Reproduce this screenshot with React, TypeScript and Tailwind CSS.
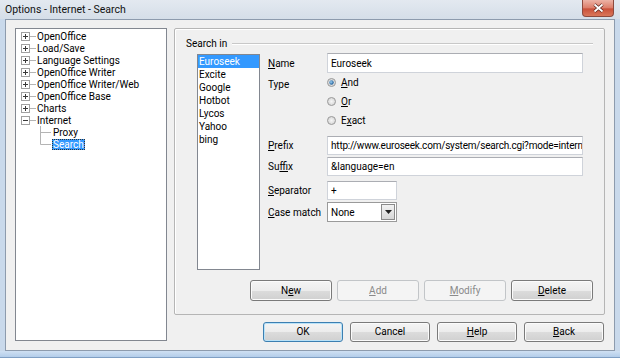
import React from "react";

type TreeNode = {
  label: string;
  state?: "plus" | "minus";
  child?: boolean;
  last?: boolean;
  selected?: boolean;
};

const treeNodes: TreeNode[] = [
  { label: "OpenOffice", state: "plus" },
  { label: "Load/Save", state: "plus" },
  { label: "Language Settings", state: "plus" },
  { label: "OpenOffice Writer", state: "plus" },
  { label: "OpenOffice Writer/Web", state: "plus" },
  { label: "OpenOffice Base", state: "plus" },
  { label: "Charts", state: "plus" },
  { label: "Internet", state: "minus" },
  { label: "Proxy", child: true },
  { label: "Search", child: true, last: true, selected: true },
];

const engines = ["Euroseek", "Excite", "Google", "Hotbot", "Lycos", "Yahoo", "bing"];

// underline the mnemonic letter
function Mn({ text, at }: { text: string; at: number }) {
  return (
    <>
      {text.slice(0, at)}
      <span className="underline underline-offset-[1px]">{text[at]}</span>
      {text.slice(at + 1)}
    </>
  );
}

function Expander({ open }: { open: boolean }) {
  return (
    <svg width="9" height="9" viewBox="0 0 9 9" className="shrink-0">
      <rect x="0.5" y="0.5" width="8" height="8" fill="#fff" stroke="#a0a0a0" />
      <path d="M2 4.5h5" stroke="#3a3a3a" />
      {!open && <path d="M4.5 2v5" stroke="#3a3a3a" />}
    </svg>
  );
}

function Connector({ last }: { last?: boolean }) {
  return (
    <svg width="11" height="12" viewBox="0 0 11 12" className="shrink-0">
      <path d={last ? "M0.5 0v6.5H11" : "M0.5 0v12M0.5 6.5H11"} stroke="#b4b4b4" fill="none" />
    </svg>
  );
}

function Radio({ checked }: { checked?: boolean }) {
  return (
    <svg width="9" height="9" viewBox="0 0 9 9" className="shrink-0">
      <defs>
        <radialGradient id="rg" cx="0.5" cy="0.5" r="0.5">
          <stop offset="0" stopColor="#f6f6f6" />
          <stop offset="1" stopColor="#d6d6d6" />
        </radialGradient>
        <radialGradient id="rd" cx="0.4" cy="0.4" r="0.6">
          <stop offset="0" stopColor="#9fd2f4" />
          <stop offset="1" stopColor="#1c5a95" />
        </radialGradient>
      </defs>
      <circle cx="4.5" cy="4.5" r="4" fill="url(#rg)" stroke="#9a9a9a" />
      {checked && <circle cx="4.5" cy="4.5" r="2.2" fill="url(#rd)" />}
    </svg>
  );
}

function WinButton({
  children,
  disabled,
  isDefault,
  className = "",
}: {
  children: React.ReactNode;
  disabled?: boolean;
  isDefault?: boolean;
  className?: string;
}) {
  const look = disabled
    ? "border-[#c2c5c8] bg-[#f4f4f4] text-[#8a8a8a]"
    : isDefault
      ? "border-[#3c7fb1] bg-[linear-gradient(to_bottom,#f4f4f4_0%,#ececec_50%,#dcdcdc_51%,#d0d0d0_100%)] shadow-[inset_0_0_0_1px_#b9e2f8]"
      : "border-[#7a7a7a] bg-[linear-gradient(to_bottom,#f4f4f4_0%,#ececec_50%,#dcdcdc_51%,#d0d0d0_100%)] shadow-[inset_0_0_0_1px_#fbfbfb]";
  return (
    <div className={`flex items-center justify-center rounded-[3px] border ${look} ${className}`}>
      <span className="leading-[12px]">{children}</span>
    </div>
  );
}

function TextBox({ value, className = "" }: { value: string; className?: string }) {
  return (
    <div
      className={`flex items-center overflow-hidden whitespace-nowrap border border-[#cfd3da] border-t-[#abadb3] bg-white pl-[3px] ${className}`}
    >
      {value}
    </div>
  );
}

function TreePanel() {
  return (
    <div className="h-[313px] w-[152px] shrink-0 border border-[#828790] bg-white pt-[1px]">
      {treeNodes.map((n) => (
        <div key={n.label} className="flex h-[12px] items-center whitespace-nowrap">
          {n.child ? (
            <>
              <div className="w-[24px] shrink-0" />
              <Connector last={n.last} />
              <span
                className={`ml-[1px] px-[1px] leading-[11px] ${
                  n.selected ? "bg-[#3399ff] text-white outline outline-dotted outline-[#333] -outline-offset-1" : ""
                }`}
              >
                {n.label}
              </span>
            </>
          ) : (
            <>
              <div className="w-[5px] shrink-0" />
              <Expander open={n.state === "minus"} />
              <div className="h-px w-[6px] shrink-0 bg-[#b4b4b4]" />
              <span className="ml-[1px]">{n.label}</span>
            </>
          )}
        </div>
      ))}
    </div>
  );
}

function SearchPanel() {
  return (
    <div className="flex h-[287px] flex-col rounded-[2px] border border-[#b5b5b5] shadow-[inset_1px_1px_0_#fff]">
      <div className="mt-[9px] flex h-[12px] items-center pl-[11px] pr-[11px]">
        <span className="leading-[12px]">Search in</span>
        <div className="ml-[5px] h-[2px] flex-1 border-t border-b border-t-[#c8c8c8] border-b-white" />
      </div>

      <div className="mt-[3px] flex pl-[22px]">
        <div className="mt-[1px] h-[216px] w-[63px] shrink-0 border border-[#828790] bg-white">
          {engines.map((e, i) => (
            <div
              key={e}
              className={`flex h-[13px] items-center px-[1px] ${i === 0 ? "bg-[#3399ff] text-white" : ""}`}
            >
              {e}
            </div>
          ))}
        </div>

        <div className="ml-[8px] flex flex-col">
          <div className="flex h-[20px] items-center">
            <span className="w-[59px] shrink-0">
              <Mn text="Name" at={0} />
            </span>
            <TextBox value="Euroseek" className="h-[20px] w-[256px]" />
          </div>

          <div className="flex">
            <span className="w-[59px] shrink-0 pt-[5px] leading-[13px]">Type</span>
            <div className="flex flex-col">
              {[
                { t: "And", at: 0, c: true },
                { t: "Or", at: 0, c: false },
                { t: "Exact", at: 1, c: false },
              ].map((r) => (
                <div key={r.t} className="flex h-[19px] items-center">
                  <Radio checked={r.c} />
                  <span className="ml-[5px]">
                    <Mn text={r.t} at={r.at} />
                  </span>
                </div>
              ))}
            </div>
          </div>

          <div className="mt-[6px] flex h-[19px] items-center">
            <span className="w-[59px] shrink-0">
              <Mn text="Prefix" at={0} />
            </span>
            <TextBox
              value="http://www.euroseek.com/system/search.cgi?mode=intern"
              className="h-[19px] w-[256px] tracking-[-0.2px]"
            />
          </div>

          <div className="mt-[2px] flex h-[19px] items-center">
            <span className="w-[59px] shrink-0">
              <Mn text="Suffix" at={2} />
            </span>
            <TextBox value="&language=en" className="h-[19px] w-[256px]" />
          </div>

          <div className="mt-[5px] flex h-[19px] items-center">
            <span className="w-[59px] shrink-0">
              <Mn text="Separator" at={0} />
            </span>
            <TextBox value="+" className="h-[19px] w-[70px]" />
          </div>

          <div className="mt-[2px] flex h-[20px] items-center">
            <span className="w-[59px] shrink-0">
              <Mn text="Case match" at={0} />
            </span>
            <div className="flex h-[20px] w-[70px] items-center border border-[#9a9a9a] bg-white pl-[3px]">
              <span className="flex-1">None</span>
              <div className="mr-[1px] flex h-[16px] w-[14px] items-center justify-center border border-[#8a8a8a] bg-[linear-gradient(to_bottom,#f2f2f2,#d6d6d6)]">
                <svg width="7" height="4" viewBox="0 0 7 4">
                  <path d="M0 0h7L3.5 4z" fill="#222" />
                </svg>
              </div>
            </div>
          </div>
        </div>
      </div>

      <div className="mt-auto flex justify-end gap-[5px] pb-[13px] pr-[11px]">
        <WinButton className="h-[21px] w-[82px]">
          <Mn text="New" at={1} />
        </WinButton>
        <WinButton className="h-[21px] w-[82px]" disabled>
          <Mn text="Add" at={0} />
        </WinButton>
        <WinButton className="h-[21px] w-[82px]" disabled>
          <Mn text="Modify" at={0} />
        </WinButton>
        <WinButton className="h-[21px] w-[82px]">
          <Mn text="Delete" at={0} />
        </WinButton>
      </div>
    </div>
  );
}

export default function App() {
  return (
    <div className="flex h-[358px] w-[620px] flex-col overflow-hidden bg-[#c9d9eb] font-[Roboto,sans-serif] text-[10px] text-black">
      <div className="flex h-[19px] shrink-0 items-start bg-[linear-gradient(to_bottom,#e3e9f0,#d5dee8)]">
        <span className="ml-[5px] mt-[3px] text-[10.5px] leading-[13px] text-[#111]">Options - Internet - Search</span>
        <div className="ml-auto mr-[6px] flex h-[17px] w-[32px] items-center justify-center rounded-b-[4px] border border-t-0 border-[#8d4a3e] bg-[linear-gradient(to_bottom,#edb3a6_0%,#dc7d69_50%,#c9503a_55%,#d9775a_100%)]">
          <svg width="11" height="10" viewBox="0 0 11 10">
            <path d="M1.5 1.5l8 7M9.5 1.5l-8 7" stroke="#5a231b" strokeWidth="3.2" />
            <path d="M1.5 1.5l8 7M9.5 1.5l-8 7" stroke="#fff" strokeWidth="1.8" />
          </svg>
        </div>
      </div>

      <div className="mx-[5px] flex h-[332px] shrink-0 border border-[#8d9bad] bg-[#f0f0f0] px-[9px] pt-[8px]">
        <TreePanel />
        <div className="ml-[7px] flex w-[431px] flex-col">
          <SearchPanel />
          <div className="mt-[7px] flex justify-end gap-[7px] pr-[1px]">
            <WinButton className="h-[20px] w-[80px]" isDefault>
              OK
            </WinButton>
            <WinButton className="h-[20px] w-[80px]">Cancel</WinButton>
            <WinButton className="h-[20px] w-[80px]">
              <Mn text="Help" at={0} />
            </WinButton>
            <WinButton className="h-[20px] w-[80px]">
              <Mn text="Back" at={0} />
            </WinButton>
          </div>
        </div>
      </div>

      <div className="flex-1 border-b border-[#7f9fc4] bg-[linear-gradient(to_bottom,#cfe0f3,#b3cdea)]" />
    </div>
  );
}
